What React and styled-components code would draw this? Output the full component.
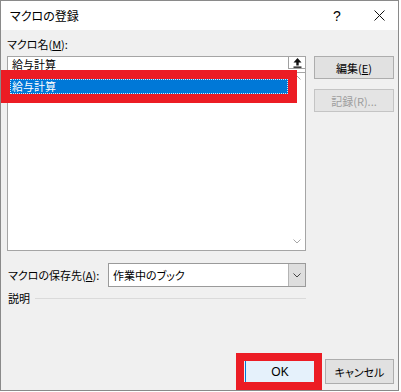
import React from "react";
import styled, { createGlobalStyle } from "styled-components";

const GlobalStyle = createGlobalStyle`
  html, body {
    margin: 0;
    padding: 0;
    background: #fff;
  }
  body {
    font-family: "Noto Sans CJK JP", "Noto Sans", sans-serif;
    font-size: 11px;
    font-feature-settings: "palt";
    color: #000;
  }
`;

const Window = styled.div`
  width: 399px;
  height: 391px;
  box-sizing: border-box;
  border: 1px solid #8a8a8a;
  display: flex;
  flex-direction: column;
  background: #f0f0f0;
`;

const TitleBar = styled.div`
  height: 29px;
  flex: none;
  background: #fff;
  display: flex;
  align-items: center;
  padding-left: 9px;
`;

const Title = styled.div`
  flex: 1;
  font-size: 12px;
`;

const TitleIcon = styled.div`
  width: ${(p) => p.$w}px;
  margin-right: ${(p) => p.$mr || 0}px;
  height: 29px;
  display: flex;
  align-items: center;
  justify-content: center;
  font-family: "Liberation Sans", sans-serif;
  font-size: 14px;
`;

const Body = styled.div`
  flex: 1;
  display: flex;
  flex-direction: column;
  padding: 7px 4px 6px 6px;
`;

const Main = styled.div`
  display: grid;
  grid-template-columns: 299px 80px;
  column-gap: 8px;
`;

const LeftCol = styled.div`
  display: flex;
  flex-direction: column;
`;

const Label = styled.div`
  height: 14px;
  line-height: 14px;
  white-space: nowrap;
`;

const U = styled.span`
  text-decoration: underline;
  text-underline-offset: 1px;
`;

const NameField = styled.div`
  margin-top: 5px;
  height: 16px;
  box-sizing: border-box;
  border: 1px solid #a5a5a5;
  border-bottom: none;
  background: #fff;
  display: flex;
  align-items: flex-start;
`;

const FieldText = styled.div`
  flex: 1;
  padding-left: 4px;
  line-height: 15px;
`;

const CollapseButton = styled.div`
  width: 17px;
  height: 12px;
  box-sizing: border-box;
  border-left: 1px solid #a0a0a0;
  border-bottom: 1px solid #a0a0a0;
  background: #fff;
  display: flex;
  align-items: center;
  justify-content: center;
`;

const ListBox = styled.div`
  height: 179px;
  box-sizing: border-box;
  border: 1px solid #a5a5a5;
  background: #fff;
  display: flex;
`;

const Items = styled.div`
  flex: 1;
  padding: 6px 0 0 2px;
`;

const Item = styled.div`
  position: relative;
  z-index: 1;
  height: 15px;
  line-height: 13px;
  box-sizing: border-box;
  padding-left: 1px;
  background: #0078d7;
  color: #fff;
  border: 1px dotted #cfe6fa;
  outline: 9px solid #ec1c24;
`;

const ScrollBar = styled.div`
  width: 17px;
  display: flex;
  flex-direction: column;
  justify-content: space-between;
  background: #fff;
`;

const ScrollArrow = styled.div`
  height: 17px;
  display: flex;
  align-items: ${(p) => (p.$top ? "flex-start" : "center")};
  padding-top: ${(p) => (p.$top ? 2 : 0)}px;
  box-sizing: border-box;
  justify-content: center;
`;

const ComboRow = styled.div`
  margin-top: 12px;
  height: 24px;
  display: flex;
  align-items: center;
`;

const ComboLabel = styled.div`
  width: 100px;
  padding-left: 1px;
  white-space: nowrap;
`;

const Combo = styled.div`
  flex: 1;
  height: 24px;
  box-sizing: border-box;
  border: 1px solid #9a9a9a;
  background: #fff;
  display: flex;
`;

const ComboText = styled.div`
  flex: 1;
  padding-left: 4px;
  line-height: 22px;
`;

const ComboDrop = styled.div`
  width: 16px;
  border-left: 1px solid #b4b4b4;
  background: #dedede;
  display: flex;
  align-items: center;
  justify-content: center;
`;

const DescRow = styled.div`
  margin-top: 4px;
  height: 14px;
  line-height: 14px;
  display: flex;
  align-items: center;
  padding-left: 1px;
`;

const DescLine = styled.div`
  flex: 1;
  margin-left: 5px;
  border-top: 1px solid #dadada;
`;

const RightCol = styled.div`
  display: flex;
  flex-direction: column;
  gap: 10px;
  padding-top: 19px;
`;

const Button = styled.div`
  height: ${(p) => p.$h || 23}px;
  width: ${(p) => (p.$w ? `${p.$w}px` : "auto")};
  box-sizing: border-box;
  border: 1px solid ${(p) => (p.$disabled ? "#c4c4c4" : "#adadad")};
  background: ${(p) => (p.$disabled ? "#e4e4e4" : "#e1e1e1")};
  color: ${(p) => (p.$disabled ? "#9d9d9d" : "#000")};
  display: flex;
  align-items: center;
  justify-content: center;
  white-space: nowrap;
`;

const Footer = styled.div`
  margin-top: auto;
  display: flex;
  justify-content: flex-end;
  gap: 10px;
`;

const OkButton = styled(Button)`
  position: relative;
  background: #e5f1fb;
  border-color: #0078d7;
  font-family: "Liberation Sans", sans-serif;
  font-size: 12px;

  &::after {
    content: "";
    position: absolute;
    top: -7px;
    left: -10px;
    right: -8px;
    bottom: -7px;
    border: 8px solid #ec1c24;
  }
`;

const Chevron = ({ up, color = "#a6a6a6" }) => (
  <svg width="8" height="5" viewBox="0 0 8 5">
    <path
      d={up ? "M0.5 4.5 L4 1 L7.5 4.5" : "M0.5 0.5 L4 4 L7.5 0.5"}
      fill="none"
      stroke={color}
      strokeWidth="1"
    />
  </svg>
);

export default function App() {
  return (
    <>
      <GlobalStyle />
      <Window>
        <TitleBar>
          <Title>マクロの登録</Title>
          <TitleIcon $w={30} $mr={8}>?</TitleIcon>
          <TitleIcon $w={38}>
            <svg width="11" height="11" viewBox="0 0 11 11">
              <path d="M0.5 0.5 L10.5 10.5 M10.5 0.5 L0.5 10.5" stroke="#111" strokeWidth="1" />
            </svg>
          </TitleIcon>
        </TitleBar>
        <Body>
          <Main>
            <LeftCol>
              <Label>
                マクロ名(<U>M</U>):
              </Label>
              <NameField>
                <FieldText>給与計算</FieldText>
                <CollapseButton>
                  <svg width="9" height="10" viewBox="0 0 9 10">
                    <path d="M4.5 0 L8.5 4.5 H5.7 V7.5 H3.3 V4.5 H0.5 Z" fill="#111" />
                    <rect x="0.5" y="8.5" width="8" height="1.3" fill="#111" />
                  </svg>
                </CollapseButton>
              </NameField>
              <ListBox>
                <Items>
                  <Item>給与計算</Item>
                </Items>
                <ScrollBar>
                  <ScrollArrow $top>
                    <Chevron up />
                  </ScrollArrow>
                  <ScrollArrow>
                    <Chevron />
                  </ScrollArrow>
                </ScrollBar>
              </ListBox>
              <ComboRow>
                <ComboLabel>
                  マクロの保存先(<U>A</U>):
                </ComboLabel>
                <Combo>
                  <ComboText>作業中のブック</ComboText>
                  <ComboDrop>
                    <Chevron color="#444" />
                  </ComboDrop>
                </Combo>
              </ComboRow>
              <DescRow>
                説明
                <DescLine />
              </DescRow>
            </LeftCol>
            <RightCol>
              <Button>
                編集(<U>E</U>)
              </Button>
              <Button $disabled>記録(R)...</Button>
            </RightCol>
          </Main>
          <Footer>
            <OkButton $w={70} $h={25}>OK</OkButton>
            <Button $w={69} $h={25}>キャンセル</Button>
          </Footer>
        </Body>
      </Window>
    </>
  );
}
